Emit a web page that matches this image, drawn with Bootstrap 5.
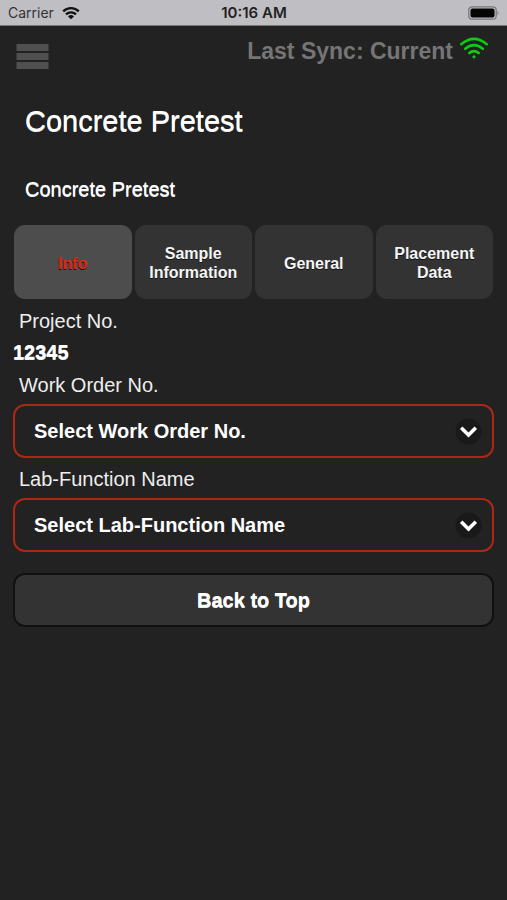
<!DOCTYPE html>
<html lang="en">
<head>
<meta charset="utf-8">
<meta name="viewport" content="width=device-width, initial-scale=1">
<title>Concrete Pretest</title>
<link href="https://cdn.jsdelivr.net/npm/bootstrap@5.3.0/dist/css/bootstrap.min.css" rel="stylesheet">
<style>
  body { background: #222; color: #fff; font-family: "Liberation Sans", Arial, sans-serif; font-size: 20px; line-height: 24px; }
  .status-bar { background: #bfbec3; height: 26px; padding: 1px 7px 0 8px; border-bottom: 1px solid #777; font-family: Inter, sans-serif; }
  .status-bar .carrier { font-size: 14px; color: #333; }
  .status-bar .clock { font-size: 15px; font-weight: 600; color: #222; }
  .app-bar { padding: 10px 18px 0 16px; height: 64px; }
  .menu-btn { line-height: 0; margin-top: 8px; }
  .sync { color: #757575; font-size: 23px; line-height: 30px; gap: 6px; }
  .page-head { padding: 13px 25px 0; }
  .page-head h1 { font-size: 29px; line-height: 36px; font-weight: 400; text-shadow: 0 1px 0 #eee; margin-bottom: 38px; }
  .page-head h2 { font-size: 20px; line-height: 24px; font-weight: 400; text-shadow: 0 1px 0 #eee; margin-bottom: 24px; }
  .sheet { padding: 0 13px; }
  .tabs { gap: 3px; padding: 0 1px; margin-bottom: 10px; }
  .tab-btn { background: #333; color: #f5f5f5; font-size: 16px; line-height: 19px; font-weight: 700; border: 0; border-radius: 11px; min-height: 74px; padding: 5px 4px 3px; text-shadow: 0 1px 0 #111; }
  .tab-btn:hover { background: #3c3c3c; color: #fff; }
  .tab-btn.active { background: #4d4d4d; color: #e5260a; }
  .field-label { padding-left: 6px; color: #eee; display: block; margin-bottom: 7px; }
  .value { font-weight: 700; margin-bottom: 9px; text-shadow: 0 1px 0 #eee; }
  .pick { background: #222; color: #fff; font-weight: 700; border: 2px solid #ad2715; border-radius: 12px; height: 54px; padding: 0 50px 0 19px; appearance: none; width: 100%; display: block; }
  .pick-caret { right: 12px; top: 14px; pointer-events: none; }
  .field-gap { margin-bottom: 9px; }
  .top-btn { background: #333; color: #fff; font-size: 20px; font-weight: 700; border: 2px solid #111; border-radius: 12px; height: 54px; margin-top: 21px; text-shadow: 0 1px 0 #eee; }
  .top-btn:hover { background: #3c3c3c; color: #fff; }
</style>
</head>
<body>
<div class="status-bar d-flex align-items-center">
  <div class="d-flex align-items-center gap-2 w-100">
    <span class="carrier">Carrier</span>
    <svg width="18" height="14" viewBox="0 0 18 14" fill="none" stroke="#111" stroke-width="2.3" aria-hidden="true"><path d="M1.2 5.4a11 11 0 0 1 15.6 0M4 8.4a7 7 0 0 1 10 0"/><path d="M9 13.2 6 10.4a4.3 4.3 0 0 1 6 0z" fill="#111" stroke="none"/></svg>
  </div>
  <span class="clock text-nowrap">10:16 AM</span>
  <div class="d-flex justify-content-end w-100">
    <svg width="32" height="14" viewBox="0 0 32 14" aria-hidden="true"><rect x=".8" y=".8" width="27.4" height="12.4" rx="3.5" fill="none" stroke="#77767a" stroke-width="1.2"/><rect x="2.5" y="2.5" width="24" height="9" rx="2" fill="#050505"/><path d="M29.5 5q2 2 0 4z" fill="#77767a"/></svg>
  </div>
</div>
<header class="app-bar d-flex justify-content-between align-items-start">
  <button type="button" class="menu-btn btn p-0 border-0 rounded-0" aria-label="Menu">
    <svg width="33" height="26" viewBox="0 0 33 26" fill="#505050"><path d="M.5 0h32v7H.5zM.5 9h32v7H.5zM.5 18h32v7H.5z"/></svg>
  </button>
  <div class="sync d-flex fw-bold">
    <span>Last Sync: Current</span>
    <svg width="30" height="24" viewBox="0 0 30 24" fill="none" stroke="#10cc10" stroke-width="2.6" stroke-linecap="round" aria-hidden="true"><path d="M2.300 8.200q12.700-10.600 25.400 0M6.200 12.800q8.800-7.200 17.600 0M10.300 17q4.700-3.800 9.400 0"/><circle cx="15" cy="20.800" r="1.600" fill="#10cc10" stroke="none"/></svg>
  </div>
</header>
<main>
  <div class="page-head">
    <h1 class="mt-0">Concrete Pretest</h1>
    <h2 class="mt-0">Concrete Pretest</h2>
  </div>
  <div class="sheet">
    <div class="tabs d-flex" role="tablist">
      <button type="button" class="tab-btn btn active flex-fill w-100" role="tab" aria-selected="true">Info</button>
      <button type="button" class="tab-btn btn flex-fill w-100" role="tab" aria-selected="false">Sample Information</button>
      <button type="button" class="tab-btn btn flex-fill w-100" role="tab" aria-selected="false">General</button>
      <button type="button" class="tab-btn btn flex-fill w-100" role="tab" aria-selected="false">Placement Data</button>
    </div>
    <div class="field-label">Project No.</div>
    <p class="value">12345</p>
    <label class="field-label" for="work-order">Work Order No.</label>
    <div class="position-relative field-gap">
      <select id="work-order" class="pick"><option>Select Work Order No.</option></select>
      <svg class="pick-caret position-absolute" width="27" height="27" viewBox="0 0 27 27" aria-hidden="true"><circle cx="13.500" cy="13.500" r="13" fill="#191919"/><path d="M6.200 9.800 13.500 17l7.300-7.200" fill="none" stroke="#fff" stroke-width="3.600"/></svg>
    </div>
    <label class="field-label" for="lab-function">Lab-Function Name</label>
    <div class="position-relative">
      <select id="lab-function" class="pick"><option>Select Lab-Function Name</option></select>
      <svg class="pick-caret position-absolute" width="27" height="27" viewBox="0 0 27 27" aria-hidden="true"><circle cx="13.500" cy="13.500" r="13" fill="#191919"/><path d="M6.200 9.800 13.500 17l7.300-7.200" fill="none" stroke="#fff" stroke-width="3.600"/></svg>
    </div>
    <button type="button" class="top-btn btn w-100">Back to Top</button>
  </div>
</main>
<script src="https://cdn.jsdelivr.net/npm/bootstrap@5.3.0/dist/js/bootstrap.bundle.min.js"></script>
</body>
</html>
